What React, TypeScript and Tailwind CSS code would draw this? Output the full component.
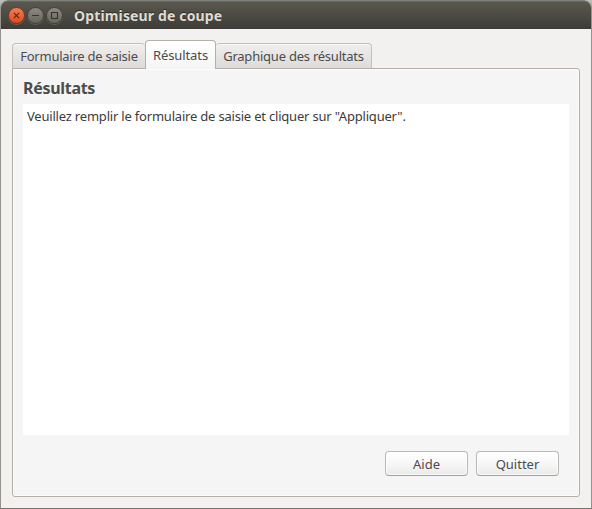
import type { ReactNode } from 'react';

function WindowButton({ close = false, children }: { close?: boolean; children: ReactNode }) {
  return (
    <span
      className={`flex size-[17px] items-center justify-center rounded-full border shadow-[0_1px_0_#626057] ${
        close
          ? 'border-[#743b27] bg-linear-to-b from-[#f47c54] to-[#dc4b1c] text-[#542515]'
          : 'border-[#45443e] bg-linear-to-b from-[#8b8980] to-[#67655f] text-[#34332e]'
      }`}
    >
      <svg className="size-[15px] shrink-0" viewBox="0 0 15 15" fill="none" stroke="currentColor" strokeWidth="1.1">
        {children}
      </svg>
    </span>
  );
}

function Tab({ label, active = false, className, textClass }: { label: string; active?: boolean; className: string; textClass: string }) {
  return (
    <div
      role="tab"
      className={`flex justify-center rounded-t-[4px] border whitespace-nowrap ${
        active
          ? 'z-10 -mb-px h-[29px] border-[#b5afaa] border-b-0 bg-linear-to-b from-white to-[#f5f5f5] pt-[5px]'
          : 'h-[25px] border-[#c4bfbb] border-b-0 bg-linear-to-b from-[#f0efee] to-[#dddbd9] pt-[3px] shadow-[inset_0_1px_0_#f8f7f7]'
      } ${className}`}
    >
      <span className={`leading-[18px] ${textClass}`}>{label}</span>
    </div>
  );
}

function Button({ label, textClass }: { label: string; textClass: string }) {
  return (
    <button className="flex h-[25px] w-[83px] items-center justify-center rounded-[4px] border border-[#bcb8b5] border-b-[#a5a19e] bg-linear-to-b from-white via-[#f7f7f7] to-[#ebeae9] shadow-[inset_0_0_0_1px_rgba(255,255,255,0.6)]">
      <span className={`leading-[18px] ${textClass}`}>{label}</span>
    </button>
  );
}

export default function App() {
  return (
    <div className="h-[509px] w-[592px] bg-[#b9bfbe] font-['Noto_Sans','Open_Sans',sans-serif] text-[13px] text-[#4c4c4c]">
      <div className="flex h-[509px] flex-col overflow-hidden rounded-t-[7px] border border-t-0 border-[#96938f] border-b-[#777470] bg-[#f2f1f0]">
        <header className="flex h-[29px] shrink-0 items-center gap-[2px] rounded-t-[7px] border-t border-[#7c817b] bg-linear-to-b from-[#5b594f] to-[#3d3c37] pl-[7px] pt-px shadow-[inset_0_1px_0_#67665c]">
          <WindowButton close>
            <path d="M4.8 4.8l5.4 5.4M10.2 4.8l-5.4 5.4" />
          </WindowButton>
          <WindowButton>
            <path d="M4 7.5h7" />
          </WindowButton>
          <WindowButton>
            <path d="M4.5 4.5h6v6h-6z" />
          </WindowButton>
          <h1 className="ml-[9px] text-[14px] leading-[18px] font-bold tracking-[0.15px] whitespace-nowrap text-[#dfdbd2] [text-shadow:0_-1px_0_#2d2c28]">
            Optimiseur de coupe
          </h1>
        </header>
        <main className="flex flex-1 flex-col px-[11px] pt-[11px] pb-[11px]">
          <div className="flex h-7 items-end" role="tablist">
            <Tab label="Formulaire de saisie" className="w-[133px] border-r-0" textClass="tracking-[-0.25px]" />
            <Tab label="Résultats" active className="w-[71px]" textClass="tracking-[-0.1px]" />
            <Tab label="Graphique des résultats" className="w-[156px] border-l-0" textClass="tracking-[-0.23px]" />
          </div>
          <section className="flex flex-1 flex-col rounded-[3px] rounded-tl-none border border-[#b5afaa] bg-[#f5f5f5] px-[10px] pt-[10px] shadow-[inset_0_0_0_1px_#fcfcfc]">
            <h2 className="h-[25px] text-[16px] leading-[19px] font-bold tracking-[-0.3px]">Résultats</h2>
            <div className="h-[331px] w-[546px] bg-white px-1 pt-[3px] text-[#3c3c3c]">
              <p className="leading-[18px] tracking-[-0.2px] whitespace-nowrap">
                Veuillez remplir le formulaire de saisie et cliquer sur "Appliquer".
              </p>
            </div>
            <div className="mt-4 flex justify-end gap-2 pr-[10px]">
              <Button label="Aide" textClass="" />
              <Button label="Quitter" textClass="" />
            </div>
          </section>
        </main>
      </div>
    </div>
  );
}
